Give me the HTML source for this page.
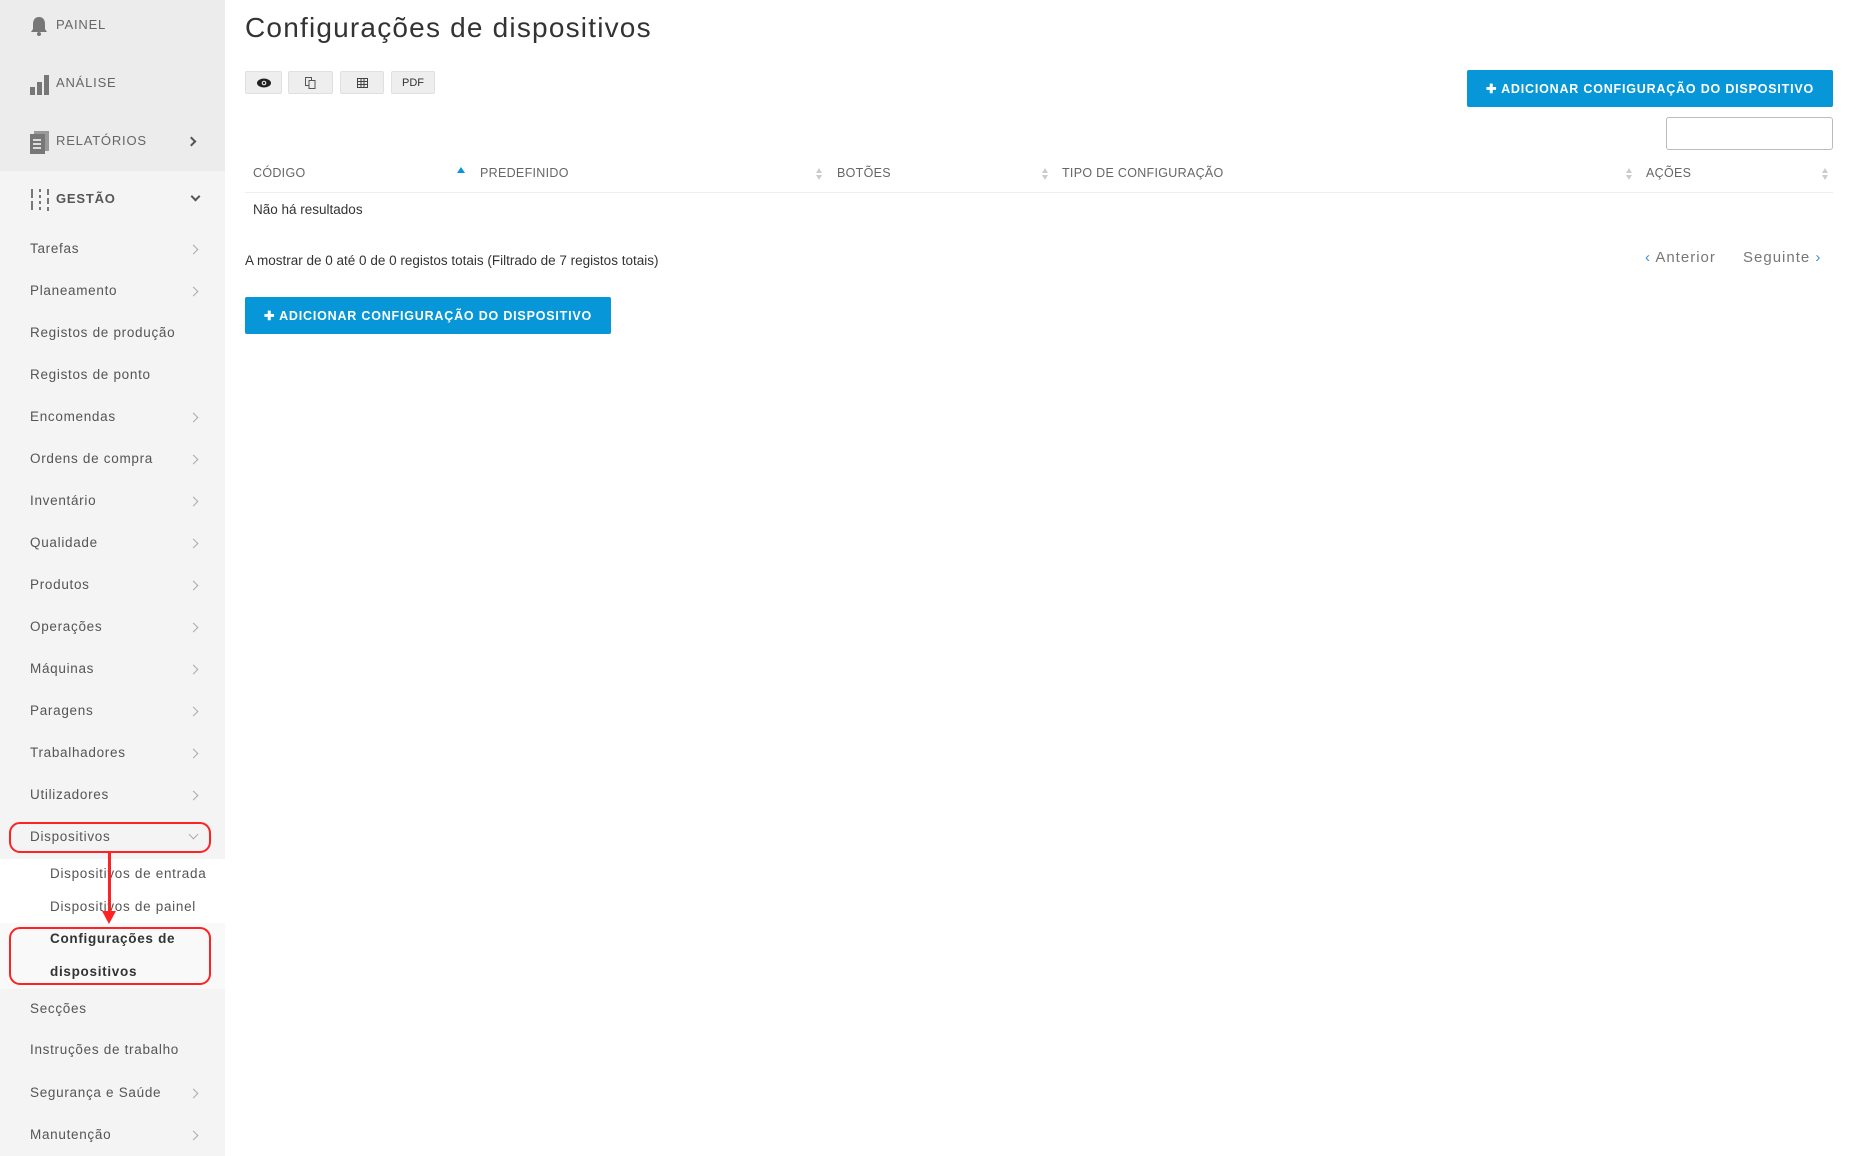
<!DOCTYPE html>
<html><head><meta charset="utf-8"><style>
*{margin:0;padding:0;box-sizing:border-box}
body{width:1857px;height:1156px;overflow:hidden;background:#fff;font-family:"Liberation Sans",sans-serif;color:#444;position:relative}
.sb{position:absolute;left:0;top:0;width:225px;height:1156px;background:#f4f4f4}
.sbtop{position:absolute;left:0;top:0;width:225px;height:171px;background:#ececec}
.t{position:absolute;font-size:13.5px;letter-spacing:.7px;color:#555;white-space:nowrap}
.top{font-size:13px;letter-spacing:.8px;color:#666}
.ch{position:absolute;left:190px;width:7px;height:7px;border-right:1.3px solid #aaa;border-bottom:1.3px solid #aaa;transform:rotate(-45deg)}
.main{position:absolute;font-size:13.5px;white-space:nowrap}
.btn{position:absolute;background:#0796d8;color:#fff;font-weight:bold;font-size:12.5px;letter-spacing:.8px;display:flex;align-items:center;justify-content:center;border-radius:2px}
.sm{position:absolute;top:71px;height:23px;background:#eee;border:1px solid #e0e0e0;border-radius:2px;font-size:11px;display:flex;align-items:center;justify-content:center;color:#333}
.th{position:absolute;top:166px;font-size:12.5px;letter-spacing:.3px;color:#666}
.srt{position:absolute;top:167px;width:8px;height:14px}
</style></head><body>
<div class="sb"></div><div class="sbtop"></div>
<svg style="position:absolute;left:29px;top:16px" width="20" height="20" viewBox="0 0 20 20"><path d="M10 1c-4 0-6 3-6 7v5l-2 3h16l-2-3V8c0-4-2-7-6-7z" fill="#777"/><circle cx="10" cy="18" r="2" fill="#777"/></svg>
<div class="t top" style="left:56px;top:17px">PAINEL</div>
<svg style="position:absolute;left:29px;top:73px" width="22" height="22"><rect x="1" y="14" width="5" height="8" fill="#777"/><rect x="8" y="9" width="5" height="13" fill="#777"/><rect x="15" y="2" width="5" height="20" fill="#777"/></svg>
<div class="t top" style="left:56px;top:75px">ANÁLISE</div>
<svg style="position:absolute;left:30px;top:131px" width="20" height="23"><rect x="4" y="0" width="15" height="20" fill="#999"/><rect x="0" y="3" width="15" height="20" fill="#777"/><rect x="3" y="8" width="8" height="2" fill="#ddd"/><rect x="3" y="12" width="8" height="2" fill="#ddd"/><rect x="3" y="16" width="8" height="2" fill="#ddd"/></svg>
<div class="t top" style="left:56px;top:133px">RELATÓRIOS</div>
<div class="ch" style="top:138px;left:188px;border-color:#555;border-width:2px"></div>
<svg style="position:absolute;left:30px;top:189px" width="20" height="22"><g stroke="#777" stroke-width="2"><line x1="2" y1="0" x2="2" y2="22" stroke-dasharray="9 3"/><line x1="10" y1="0" x2="10" y2="22" stroke-dasharray="3 3"/><line x1="18" y1="0" x2="18" y2="22" stroke-dasharray="6 3"/></g></svg>
<div class="t top" style="left:56px;top:191px;font-weight:bold;color:#555">GESTÃO</div>
<div class="ch" style="top:193px;left:192px;transform:rotate(45deg);border-color:#555;border-width:2px"></div>

<div class="t" style="left:30px;top:241px">Tarefas</div><div class="ch" style="top:246px"></div>
<div class="t" style="left:30px;top:283px">Planeamento</div><div class="ch" style="top:288px"></div>
<div class="t" style="left:30px;top:325px">Registos de produção</div>
<div class="t" style="left:30px;top:367px">Registos de ponto</div>
<div class="t" style="left:30px;top:409px">Encomendas</div><div class="ch" style="top:414px"></div>
<div class="t" style="left:30px;top:451px">Ordens de compra</div><div class="ch" style="top:456px"></div>
<div class="t" style="left:30px;top:493px">Inventário</div><div class="ch" style="top:498px"></div>
<div class="t" style="left:30px;top:535px">Qualidade</div><div class="ch" style="top:540px"></div>
<div class="t" style="left:30px;top:577px">Produtos</div><div class="ch" style="top:582px"></div>
<div class="t" style="left:30px;top:619px">Operações</div><div class="ch" style="top:624px"></div>
<div class="t" style="left:30px;top:661px">Máquinas</div><div class="ch" style="top:666px"></div>
<div class="t" style="left:30px;top:703px">Paragens</div><div class="ch" style="top:708px"></div>
<div class="t" style="left:30px;top:745px">Trabalhadores</div><div class="ch" style="top:750px"></div>
<div class="t" style="left:30px;top:787px">Utilizadores</div><div class="ch" style="top:792px"></div>
<div class="t" style="left:30px;top:829px">Dispositivos</div><div class="ch" style="top:831px;transform:rotate(45deg)"></div>
<div style="position:absolute;left:0;top:859px;width:225px;height:64px;background:#fff"></div>
<div style="position:absolute;left:0;top:923px;width:225px;height:66px;background:#f9f9f9"></div>
<div class="t" style="left:50px;top:866px">Dispositivos de entrada</div>
<div class="t" style="left:50px;top:899px">Dispositivos de painel</div>
<div class="t" style="left:50px;top:931px;font-weight:bold;color:#333">Configurações de</div>
<div class="t" style="left:50px;top:964px;font-weight:bold;color:#333">dispositivos</div>
<div class="t" style="left:30px;top:1001px">Secções</div>
<div class="t" style="left:30px;top:1042px">Instruções de trabalho</div>
<div class="t" style="left:30px;top:1085px">Segurança e Saúde</div><div class="ch" style="top:1090px"></div>
<div class="t" style="left:30px;top:1127px">Manutenção</div><div class="ch" style="top:1132px"></div>
<div style="position:absolute;left:9px;top:822px;width:202px;height:31px;border:2.5px solid #f22;border-radius:11px"></div>
<div style="position:absolute;left:9px;top:927px;width:202px;height:58px;border:2.5px solid #f22;border-radius:11px"></div>
<div style="position:absolute;left:108px;top:853px;width:3px;height:60px;background:#f22"></div>
<div style="position:absolute;left:102px;top:911px;border-left:7.5px solid transparent;border-right:7.5px solid transparent;border-top:13px solid #f22"></div>

<div class="main" style="left:245px;top:12px;font-size:28px;letter-spacing:1.2px;color:#333">Configurações de dispositivos</div>
<div class="sm" style="left:245px;width:37px"><svg width="14" height="10"><ellipse cx="7" cy="5" rx="7" ry="4.5" fill="#222"/><circle cx="7" cy="5" r="2.3" fill="#eee"/><circle cx="7" cy="5" r="1.2" fill="#222"/></svg></div>
<div class="sm" style="left:288px;width:45px"><svg width="11" height="12"><rect x="0.5" y="0.5" width="6" height="8" fill="none" stroke="#555"/><rect x="4" y="3.5" width="6" height="8" fill="#eee" stroke="#555"/></svg></div>
<div class="sm" style="left:340px;width:44px"><svg width="11" height="10"><rect x="0.5" y="0.5" width="10" height="9" fill="none" stroke="#444"/><path d="M0 3.5h11M0 6.5h11M4 0v10M7 0v10" stroke="#444"/></svg></div>
<div class="sm" style="left:391px;width:44px">PDF</div>
<div class="btn" style="left:1467px;top:70px;width:366px;height:37px">✚ ADICIONAR CONFIGURAÇÃO DO DISPOSITIVO</div>
<div style="position:absolute;left:1666px;top:117px;width:167px;height:33px;border:1px solid #bbb;border-radius:3px"></div>
<div class="th" style="left:253px">CÓDIGO</div>
<div style="position:absolute;left:457px;top:167px;border-left:4px solid transparent;border-right:4px solid transparent;border-bottom:6px solid #0796d8"></div>
<div class="th" style="left:480px">PREDEFINIDO</div>
<div class="th" style="left:837px">BOTÕES</div>
<div class="th" style="left:1062px">TIPO DE CONFIGURAÇÃO</div>
<div class="th" style="left:1646px">AÇÕES</div>
<svg class="srt" style="left:815px"><path d="M4 1l3 5H1z M4 13l3-5H1z" fill="#ccc"/></svg>
<svg class="srt" style="left:1041px"><path d="M4 1l3 5H1z M4 13l3-5H1z" fill="#ccc"/></svg>
<svg class="srt" style="left:1625px"><path d="M4 1l3 5H1z M4 13l3-5H1z" fill="#ccc"/></svg>
<svg class="srt" style="left:1821px"><path d="M4 1l3 5H1z M4 13l3-5H1z" fill="#ccc"/></svg>
<div style="position:absolute;left:245px;top:192px;width:1588px;height:1px;background:#eee"></div>
<div class="main" style="left:253px;top:202px;color:#333">Não há resultados</div>
<div class="main" style="left:245px;top:253px;color:#333">A mostrar de 0 até 0 de 0 registos totais (Filtrado de 7 registos totais)</div>
<div class="main" style="left:1645px;top:249px;font-size:15px;letter-spacing:1px;color:#777"><span style="color:#3a8fd0">‹</span> Anterior</div>
<div class="main" style="left:1743px;top:249px;font-size:15px;letter-spacing:1px;color:#777">Seguinte <span style="color:#3a8fd0">›</span></div>
<div class="btn" style="left:245px;top:297px;width:366px;height:37px">✚ ADICIONAR CONFIGURAÇÃO DO DISPOSITIVO</div>
</body></html>
